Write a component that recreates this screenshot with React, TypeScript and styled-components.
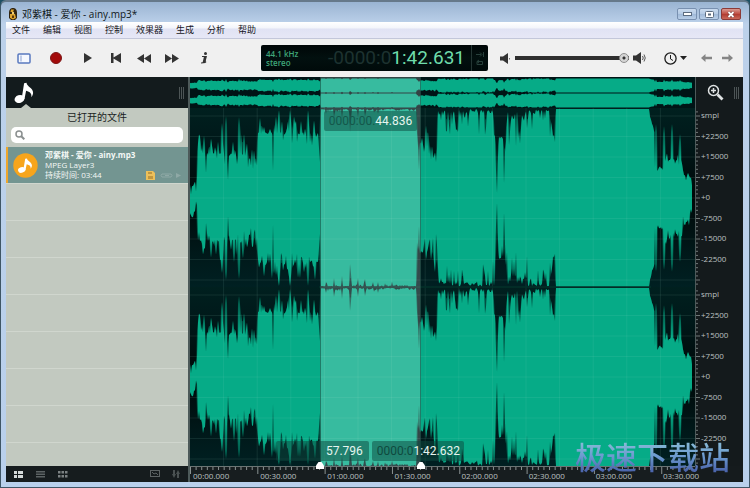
import React from "react";
import styled, { createGlobalStyle, css } from "styled-components";

const Global = createGlobalStyle`
  * { box-sizing: border-box; }
  html, body { margin: 0; height: 100%; }
  body { font-family: "Open Sans", "Noto Sans CJK SC", sans-serif; background: #1d4f63; overflow: hidden; }
  button, input { font: inherit; color: inherit; margin: 0; padding: 0; border: 0; background: none; }
  h2, p { margin: 0; }
`;

const Frame = styled.div`
  position: relative;
  display: flex;
  flex-direction: column;
  height: 100vh;
  padding: 0 6px 5px 5px;
  border: 1px solid #3f5666;
  border-top: 2px solid #66798a;
  border-radius: 6px 6px 0 0;
  background: linear-gradient(#9ab4d2, #bcd1ea 22px, #b9d0ec);
`;

const TitleBar = styled.header`
  display: flex;
  align-items: center;
  flex: 0 0 20px;
  padding: 4px 2px 0 2px;
  font-size: 10px;
  line-height: 14px;
  color: #101820;
`;
const Title = styled.span`
  flex: 1;
  margin-left: 4px;
`;
const WindowButtons = styled.div`
  display: flex;
  gap: 2px;
`;
const WindowButton = styled.button<{ $close?: boolean }>`
  width: 20px;
  height: 12px;
  border: 1px solid ${(p) => (p.$close ? "#8c3a38" : "#7890b0")};
  border-radius: 2px;
  background: ${(p) =>
    p.$close
      ? "linear-gradient(#d99a92, #bf4b40 50%, #b03a30 51%, #c9685a)"
      : "linear-gradient(#c9daee, #b4cae4 50%, #9fb9d8 51%, #b9cfe8)"};
  display: flex;
  align-items: center;
  justify-content: center;
`;

const MenuBar = styled.nav`
  display: flex;
  flex: 0 0 17px;
  gap: 13px;
  padding: 0 6px;
  border-bottom: 1px solid #c3c7da;
  background: linear-gradient(#ffffff, #f4f6fb 35%, #e1e3f4 45%, #e6e7f6);
`;
const MenuItem = styled.button`
  font-size: 9px;
  line-height: 16px;
  color: #16161c;
`;

const Toolbar = styled.div`
  display: grid;
  grid-template-columns: minmax(0, 1fr) 227px minmax(0, 1fr);
  align-items: center;
  flex: 0 0 38px;
  background: #f0f0f0;
`;
const ToolGroup = styled.div`
  display: flex;
  align-items: center;
  gap: 4px;
  padding-left: 4px;
`;
const Transport = styled.div`
  display: flex;
`;
const ToolButton = styled.button`
  display: flex;
  align-items: center;
  justify-content: center;
  width: 28px;
  height: 24px;
`;
const Lcd = styled.div`
  display: flex;
  align-items: center;
  height: 26px;
  border-radius: 2px;
  background: linear-gradient(#000607, #02100f 50%, #000a0a);
  font-family: Roboto, "Open Sans", sans-serif;
`;
const LcdFormat = styled.div`
  flex: 1;
  padding-left: 5px;
  font-family: "Open Sans", sans-serif;
  font-size: 8px;
  font-weight: 600;
  line-height: 9px;
  color: #3fa579;
`;
const LcdTime = styled.output`
  font-size: 19px;
  line-height: 26px;
  color: #6fdcab;
  white-space: nowrap;
  padding-right: 6px;
`;
const Ghost = styled.span<{ $tone: string }>`
  color: ${(p) => p.$tone};
`;
const LcdFlags = styled.div`
  display: flex;
  align-items: center;
  justify-content: center;
  width: 17px;
  height: 26px;
  border-left: 1px solid #243634;
`;
const RightTools = styled.div`
  display: flex;
  align-items: center;
  padding: 0 10px 0 12px;
`;
const Volume = styled.label`
  display: flex;
  align-items: center;
  flex: 1;
  min-width: 0;
  gap: 4px;
  > svg { flex-shrink: 0; }
`;
const VolumeSlider = styled.input`
  appearance: none;
  flex: 1;
  min-width: 0;
  height: 10px;
  background: linear-gradient(#2f2f2f, #2f2f2f) center / 100% 4px no-repeat;
  border-radius: 2px;
  &::-webkit-slider-thumb {
    appearance: none;
    width: 10px;
    height: 10px;
    border: 1px solid #8e8e8e;
    border-radius: 50%;
    background: radial-gradient(circle, #333 0 1px, #d4d4d4 2px);
  }
`;
const ClockButton = styled.button`
  display: flex;
  align-items: center;
  gap: 3px;
  margin-left: 18px;
`;
const History = styled.div`
  display: flex;
  gap: 10px;
  margin-left: 14px;
  button { display: flex; }
`;

const Body = styled.main`
  display: flex;
  flex: 1;
  min-height: 0;
  background: #151b1d;
`;
const Sidebar = styled.aside`
  display: flex;
  flex-direction: column;
  width: 182px;
  flex-shrink: 0;
`;
const SidebarTabs = styled.div`
  display: flex;
  justify-content: space-between;
  align-items: center;
  flex: 0 0 31px;
  padding: 0 4px 0 8px;
  background: #131b1d;
`;
const TabButton = styled.button`
  position: relative;
  display: flex;
  align-items: center;
  height: 31px;
  &::after {
    content: "";
    position: absolute;
    left: 7px;
    bottom: 0;
    border: 5px solid transparent;
    border-top: 0;
    border-bottom: 4px solid #c2c9c0;
  }
`;
const Panel = styled.section`
  display: flex;
  flex-direction: column;
  flex: 1;
  background: #c2c9c0;
`;
const PanelTitle = styled.h2`
  font-size: 10px;
  font-weight: 400;
  line-height: 19px;
  text-align: center;
  color: #1b1f1f;
`;
const SearchBox = styled.label`
  display: flex;
  align-items: center;
  gap: 4px;
  height: 16px;
  margin: 0 5px 4px;
  padding: 0 4px;
  border-radius: 5px;
  background: #fff;
  input { flex: 1; min-width: 0; font-size: 9px; outline: 0; }
`;
const FileList = styled.div`
  flex: 1;
  background: repeating-linear-gradient(#c2c9c0 0 36px, #d0d6ce 36px 37px);
`;
const FileRow = styled.button`
  display: flex;
  align-items: center;
  gap: 7px;
  width: 100%;
  height: 36px;
  padding: 0 4px 0 5px;
  border-left: 2px solid #efa62b;
  background: #739591;
  color: #f4f8f6;
  text-align: left;
`;
const FileText = styled.span`
  flex: 1;
  display: flex;
  flex-direction: column;
  font-size: 8px;
  line-height: 10px;
  white-space: nowrap;
`;
const LastLine = styled.span`
  display: flex;
  justify-content: space-between;
  align-items: center;
`;
const SidebarFooter = styled.div`
  display: flex;
  align-items: center;
  flex: 0 0 16px;
  gap: 11px;
  padding: 0 7px;
  background: #161c1e;
  button { display: flex; }
`;
const Spacer = styled.span`
  flex: 1;
`;

const Editor = styled.section`
  display: grid;
  grid-template-columns: minmax(0, 1fr) 48px;
  grid-template-rows: minmax(0, 1fr) 16px;
  flex: 1;
  min-width: 0;
  border-left: 2px solid #4d5a5a;
`;
const WaveArea = styled.div`
  position: relative;
  overflow: hidden;
  > svg { position: absolute; inset: 0; width: 100%; height: 100%; }
`;
const Selection = styled.div`
  position: absolute;
  top: 0;
  bottom: 0;
  left: 25.8%;
  width: 19.9%;
  background: rgba(255, 255, 255, 0.2);
  border-left: 1px solid rgba(10, 60, 50, 0.5);
  border-right: 1px solid rgba(10, 60, 50, 0.5);
`;
const tagPlace = {
  length: css`top: 34px; right: 55%; padding: 0 5px;`,
  start: css`bottom: 5px; right: 64.6%; padding: 0 6px 0 50px;`,
  end: css`bottom: 5px; left: 36%; padding: 0 4px 0 5px;`,
};
const TimeTag = styled.output<{ $place: keyof typeof tagPlace }>`
  position: absolute;
  ${(p) => tagPlace[p.$place]}
  border-radius: 2px;
  background: rgba(12, 72, 62, 0.5);
  font: 12px/20px Roboto, "Open Sans", sans-serif;
  color: #e6f5ef;
  white-space: nowrap;
`;
const ScaleColumn = styled.div`
  display: grid;
  grid-template-rows: 31px 1fr 1fr;
  background: #141a1c;
  font-size: 8px;
  color: #bcc0c0;
`;
const ScaleHead = styled.div`
  display: flex;
  align-items: center;
  justify-content: space-between;
  padding: 0 4px 0 11px;
  border-left: 1px solid #4d5a5a;
  button { display: flex; }
`;
const ChannelScale = styled.div`
  display: flex;
  min-height: 0;
  border-left: 1px solid #4d5a5a;
  > svg { width: 4px; height: 100%; flex-shrink: 0; }
`;
const ScaleLabels = styled.div`
  display: flex;
  flex-direction: column;
  justify-content: space-between;
  padding: 0 0 21px 1px;
  line-height: 14px;
`;
const Ruler = styled.div`
  position: relative;
  grid-column: 1;
  border-top: 1px solid #6b7474;
  background: #171d1f;
  > svg { position: absolute; inset: 0; width: 100%; height: 7px; }
`;
const RulerLabels = styled.div`
  display: grid;
  grid-template-columns: repeat(7, minmax(0, 67fr)) minmax(0, 35fr);
  padding-top: 2px;
  font-size: 8px;
  line-height: 13px;
  color: #bcc0c0;
  span { padding-left: 3px; white-space: nowrap; }
`;
const Marker = styled.svg<{ $at: string }>`
  && {
    position: absolute;
    inset: auto;
    top: -5px;
    left: ${(p) => p.$at};
    width: 8px;
    height: 7px;
    transform: translateX(-50%);
  }
`;
const Watermark = styled.div`
  position: absolute;
  right: 19px;
  bottom: 10px;
  font: 500 31px/42px "Noto Sans CJK SC", sans-serif;
  color: transparent;
  background: linear-gradient(#86b8d6 20%, #6d9bd0 50%, #4c66ad 85%);
  background-clip: text;
  -webkit-background-clip: text;
  pointer-events: none;
`;

/* ---------- waveform ---------- */

const WIDTH = 505;
const HEIGHT = 389;

function randomFrom(seed: number) {
  let s = seed;
  return () => {
    s = (s + 0x6d2b79f5) | 0;
    let t = Math.imul(s ^ (s >>> 15), 1 | s);
    t = (t + Math.imul(t ^ (t >>> 7), 61 | t)) ^ t;
    return ((t ^ (t >>> 14)) >>> 0) / 4294967296;
  };
}

type Part = {
  to: number;
  body: [number, number];
  up: number;
  down: number;
  upRate: number;
  downRate: number;
};

// Amplitudes run from 0 to 89; each part covers the columns up to `to`.
const parts: Part[] = [
  { to: 8, body: [12, 14], up: 32, down: 0, upRate: 0.45, downRate: 0.4 },
  { to: 56, body: [44, 42], up: 64, down: 32, upRate: 0.45, downRate: 0.2 },
  { to: 68, body: [40, 32], up: 58, down: 28, upRate: 0.4, downRate: 0.25 },
  { to: 129, body: [65, 64], up: 82, down: 52, upRate: 0.45, downRate: 0.15 },
  { to: 227, body: [88, 88], up: 89, down: 83, upRate: 0.4, downRate: 0.1 },
  { to: 248, body: [56, 48], up: 84, down: 38, upRate: 0.25, downRate: 0.3 },
  { to: 305, body: [84, 87], up: 89, down: 62, upRate: 0.25, downRate: 0.38 },
  { to: 316, body: [60, 60], up: 65, down: 42, upRate: 0.2, downRate: 0.2 },
  { to: 338, body: [78, 80], up: 87, down: 52, upRate: 0.3, downRate: 0.42 },
  { to: 360, body: [85, 87], up: 89, down: 68, upRate: 0.4, downRate: 0.36 },
  { to: 366, body: [66, 62], up: 70, down: 58, upRate: 0.1, downRate: 0.2 },
  { to: 460, body: [89, 89], up: 89, down: 89, upRate: 0, downRate: 0 },
  { to: 465, body: [82, 62], up: 80, down: 60, upRate: 0, downRate: 0 },
  { to: 475, body: [29, 29], up: 32, down: 28, upRate: 0.2, downRate: 0.1 },
  { to: 493, body: [40, 36], up: 48, down: 30, upRate: 0.2, downRate: 0.2 },
  { to: 500, body: [24, 22], up: 28, down: 17, upRate: 0.3, downRate: 0.2 },
  { to: 503, body: [20, 20], up: 24, down: 10, upRate: 0.3, downRate: 0.3 },
];

const peaks: Record<number, number> = {
  16: 25, 32: 75, 36: 82, 38: 18, 49: 81, 83: 27, 89: 88, 100: 88, 107: 56, 118: 88,
  129: 50, 130: 36, 136: 84, 144: 80, 152: 78, 160: 66, 161: 76, 168: 80, 175: 81, 188: 84,
  228: 52, 229: 28, 234: 46, 239: 44, 243: 40, 246: 36,
  306: 28, 307: 5, 308: 42, 314: 15, 315: 46, 361: 76, 362: 70, 365: 56,
  466: 74, 474: 72, 482: 74, 490: 64,
};

function envelope(seed: number) {
  const rnd = randomFrom(seed);
  const out: number[] = [];
  let from = 0;
  for (const p of parts) {
    for (let x = from; x < p.to; x++) {
      const t = (x - from) / (p.to - from);
      const base = p.body[0] + (p.body[1] - p.body[0]) * t;
      const r = rnd();
      const k = rnd();
      let a = base + (k - 0.5) * (p.up === p.down ? 0 : 4);
      if (r < p.upRate) a = base + (p.up - base) * k;
      else if (r > 1 - p.downRate) a = base - (base - p.down) * k;
      out.push(Math.min(89, peaks[x] ?? a));
    }
    from = p.to;
  }
  return out;
}

function outline(top: number[], bottom: number[], center: number, scale: (a: number) => number) {
  const up = top.map((a, x) => `${x} ${(center - scale(a)).toFixed(1)}`);
  const down = bottom.map((a, x) => `${x} ${(center + scale(a)).toFixed(1)}`).reverse();
  return `M${up.join("L")}L${down.join("L")}Z`;
}

// Spreading each peak to its neighbours gives the soft halo around the spikes.
const widen = (v: number[]) =>
  v.map((a, i) => Math.max(a, (v[i - 1] ?? 0) - 8, (v[i + 1] ?? 0) - 8));

const topEnv = envelope(7);
const lowEnv = envelope(29);

const mainScale = (a: number) => a;
const smallScale = (a: number) => (a > 84 ? 7 : 2 + a * 0.055);

function Waveform() {
  const centers = [121, 300];
  return (
    <svg viewBox={`0 0 ${WIDTH} ${HEIGHT}`} preserveAspectRatio="none" aria-label="波形">
      <defs>
        <linearGradient id="back" x1="0" y1="0" x2="0" y2="1">
          <stop offset="0" stopColor="#00201f" />
          <stop offset="0.2" stopColor="#001819" />
          <stop offset="0.5" stopColor="#000808" />
          <stop offset="0.8" stopColor="#001819" />
          <stop offset="1" stopColor="#002022" />
        </linearGradient>
      </defs>
      <rect width={WIDTH} height="31" fill="#001416" />
      <rect y="31" width={WIDTH} height="179" fill="url(#back)" />
      <rect y="210" width={WIDTH} height="179" fill="url(#back)" />
      {[8.5, 23.5].map((c) => (
        <path key={c} d={outline(topEnv, lowEnv, c, smallScale)} fill="#06ab87" />
      ))}
      {centers.map((c) => (
        <g key={c}>
          <path d={outline(widen(topEnv), widen(lowEnv), c, mainScale)} fill="#06ab87" opacity="0.35" />
          <path d={outline(topEnv, lowEnv, c, mainScale)} fill="#06ab87" />
        </g>
      ))}
      <g stroke="#9fe0d0" strokeOpacity="0.1">
        {centers.flatMap((c) =>
          [-82, -61.5, -41, -20.5, 0, 20.5, 41, 61.5, 82].map((d) => (
            <line key={`${c}${d}`} x1="0" x2={WIDTH} y1={c + d} y2={c + d} />
          ))
        )}
        {Array.from({ length: 14 }, (_, i) => (
          <line key={i} x1={33.6 * (i + 1)} x2={33.6 * (i + 1)} y1="31" y2={HEIGHT} />
        ))}
      </g>
      <line x1="129" x2="461" y1="210" y2="210" stroke="#03302a" strokeWidth="1.4" />
    </svg>
  );
}

/* ---------- icons ---------- */

const Note = ({ w, h, color }: { w: number; h: number; color: string }) => (
  <svg width={w} height={h} viewBox="0 0 19 22" fill={color}>
    <ellipse cx="5" cy="17" rx="5" ry="4" transform="rotate(-18 5 17)" />
    <path d="M7.2 16.5 9.6 1.2 12 .8c.4 4 6.8 5.200 6.600 10.200-.1 1.500-.8 3-1.800 4.200.7-3.400-1.200-5.400-5.200-6.400L10 17z" />
  </svg>
);
const Grip = () => (
  <svg width="5" height="12" viewBox="0 0 5 12" stroke="#4d5556">
    <path d="M.5 0v12M2.500 0v12M4.500 0v12" />
  </svg>
);
const Arrow = ({ flip }: { flip?: boolean }) => (
  <svg width="11" height="8" viewBox="0 0 11 8">
    <path d={flip ? "M11 4 6.500 0v2.700H0v2.600h6.500V8z" : "M0 4 4.500 0v2.700H11v2.600H4.500V8z"} fill="#858585" />
  </svg>
);

function ScaleTicks() {
  return (
    <svg viewBox="0 0 4 179" preserveAspectRatio="none" stroke="#7b8383">
      {Array.from({ length: 43 }, (_, i) => {
        const n = i - 21;
        return <line key={i} x1="0" x2={n % 5 === 0 ? 4 : 2} y1={90 + n * 4.1} y2={90 + n * 4.1} strokeWidth="0.9" />;
      })}
    </svg>
  );
}

const menus = ["文件", "编辑", "视图", "控制", "效果器", "生成", "分析", "帮助"];
const levels = ["smpl", "+22500", "+15000", "+7500", "+0", "-7500", "-15000", "-22500"];
const times = ["00:00.000", "00:30.000", "01:00.000", "01:30.000", "02:00.000", "02:30.000", "03:00.000", "03:30.000"];

export default function App() {
  return (
    <>
      <Global />
      <Frame>
        <TitleBar>
          <svg width="10" height="12" viewBox="0 0 10 12">
            <path d="M1 5C1 1 3 0 5 0s4 1 4 5v5l-2 2H3l-2-2z" fill="#30230f" />
            <path d="M3 1.500h3L5 4H2.500zM2 6h5l1 4-3 1.500L2 10z" fill="#dda52f" />
            <circle cx="5" cy="5" r="1.200" fill="#f3d27a" />
            <path d="M4 7.500h2V10H4z" fill="#57360d" />
          </svg>
          <Title>邓紫棋 - 爱你 - ainy.mp3*</Title>
          <WindowButtons>
            <WindowButton aria-label="最小化">
              <svg width="9" height="4"><rect x=".5" y=".5" width="8" height="3" fill="#fff" stroke="#5c6c80" /></svg>
            </WindowButton>
            <WindowButton aria-label="最大化">
              <svg width="9" height="7"><rect x=".5" y=".5" width="8" height="6" rx="1" fill="#fff" stroke="#5c6c80" /><rect x="3" y="2.500" width="3" height="2" fill="#5c6c80" /></svg>
            </WindowButton>
            <WindowButton $close aria-label="关闭">
              <svg width="8" height="7" viewBox="0 0 8 7"><path d="m1.500 1 5 5m0-5-5 5" stroke="#6c3434" strokeWidth="3" /><path d="m1.500 1 5 5m0-5-5 5" stroke="#fff" strokeWidth="1.800" /></svg>
            </WindowButton>
          </WindowButtons>
        </TitleBar>

        <MenuBar>
          {menus.map((m) => <MenuItem key={m}>{m}</MenuItem>)}
        </MenuBar>

        <Toolbar>
          <ToolGroup>
            <ToolButton aria-label="侧栏">
              <svg width="14" height="11"><rect x="1" y="1" width="12" height="9" rx="1" fill="#f5f8ff" stroke="#5878bf" strokeWidth="1.500" /><path d="M4 2.500v6" stroke="#8aa0d0" /></svg>
            </ToolButton>
            <ToolButton aria-label="录音">
              <svg width="12" height="12"><circle cx="6" cy="6" r="5.500" fill="#a30b0b" stroke="#7c1616" /></svg>
            </ToolButton>
            <Transport>
              <ToolButton aria-label="播放">
                <svg width="8" height="10"><path d="M0 0 8 5 0 10z" fill="#333" /></svg>
              </ToolButton>
              <ToolButton aria-label="开头">
                <svg width="10" height="10"><path d="M0 0h2.500v4.500L10 0v10L2.500 5.500V10H0z" fill="#333" /></svg>
              </ToolButton>
              <ToolButton aria-label="快退">
                <svg width="14" height="9"><path d="M0 4.500 7 0v9zM7 4.500 14 0v9z" fill="#333" /></svg>
              </ToolButton>
              <ToolButton aria-label="快进">
                <svg width="14" height="9"><path d="M0 0 7 4.500 0 9zM7 0 14 4.500 7 9z" fill="#333" /></svg>
              </ToolButton>
            </Transport>
            <ToolButton aria-label="信息">
              <svg width="7" height="12"><circle cx="4.500" cy="1.500" r="1.500" fill="#333" /><path d="M1 4.500h4.200L3.800 10h1.400M0 11l4.500-.5" fill="none" stroke="#333" strokeWidth="1.200" /><path d="M3 4.500h2.200L4 11H1.500z" fill="#333" /></svg>
            </ToolButton>
          </ToolGroup>

          <Lcd>
            <LcdFormat>44.1 kHz<br />stereo</LcdFormat>
            <LcdTime><Ghost $tone="#1d3230">-0000:0</Ghost>1:42.631</LcdTime>
            <LcdFlags>
              <svg width="8" height="13" fill="none" stroke="#27403b">
                <path d="M0 2.500h5M4 .5l2 2-2 2M7.500 0v5M1 9.500h5.500v3H1zM3 8l-2 1.500L3 11" />
              </svg>
            </LcdFlags>
          </Lcd>

          <RightTools>
            <Volume>
              <svg width="11" height="11" viewBox="0 0 11 11" fill="#333"><path d="M0 3.500h3L8 0v11L3 7.500H0z" /><path d="M9.500 5v1.500" stroke="#777" /></svg>
              <VolumeSlider type="range" aria-label="音量" min="0" max="100" defaultValue="100" />
              <svg width="13" height="12" viewBox="0 0 13 12"><path d="M0 3.500h3L8 0v12L3 8.500H0z" fill="#333" /><path d="M9.500 4q1.500 2 0 4M11 2.500q2.500 3.500 0 7" fill="none" stroke="#555" /></svg>
            </Volume>
            <ClockButton aria-label="时间格式">
              <svg width="13" height="13" fill="none" stroke="#1c1c1c"><circle cx="6.500" cy="6.500" r="5.600" strokeWidth="1.300" /><path d="M6.500 3v4l2.500 1.500" /></svg>
              <svg width="7" height="4"><path d="M0 0h7L3.500 4z" fill="#222" /></svg>
            </ClockButton>
            <History>
              <button aria-label="撤销"><Arrow /></button>
              <button aria-label="重做"><Arrow flip /></button>
            </History>
          </RightTools>
        </Toolbar>

        <Body>
          <Sidebar>
            <SidebarTabs>
              <TabButton aria-label="音频文件"><Note w={20} h={22} color="#fff" /></TabButton>
              <Grip />
            </SidebarTabs>
            <Panel>
              <PanelTitle>已打开的文件</PanelTitle>
              <SearchBox>
                <svg width="10" height="10" fill="none" stroke="#8a8f8f" strokeWidth="1.500"><circle cx="4" cy="4" r="3" /><path d="m6.300 6.300 3 3" strokeWidth="2" /></svg>
                <input type="search" aria-label="搜索" />
              </SearchBox>
              <FileList>
                <FileRow>
                  <svg width="25" height="25" viewBox="0 0 25 25"><circle cx="12.500" cy="12.500" r="12.200" fill="#f7a51c" /><g transform="translate(5 5) scale(.75 .7)" fill="#fff"><ellipse cx="5" cy="17" rx="5" ry="4" transform="rotate(-18 5 17)" /><path d="M7.200 16.500 9.600 1.200 12 .8c.4 4 6.800 5.200 6.600 10.200-.1 1.500-.8 3-1.800 4.200.7-3.400-1.200-5.400-5.200-6.400L10 17z" /></g></svg>
                  <FileText>
                    <b>邓紫棋 - 爱你 - ainy.mp3</b>
                    <span>MPEG Layer3</span>
                    <LastLine>
                      持续时间: 03:44
                      <svg width="38" height="9" viewBox="0 0 38 9">
                        <path d="M0 0h7l2 2v7H0z" fill="#edc05a" /><path d="M2 1h4v2H2zM2 5h5v3H2z" fill="#c1963f" />
                        <path d="M16 3h9q2 1.500 0 3h-9q-2-1.500 0-3zM19 4.500h4" fill="none" stroke="#8fa9a6" />
                        <path d="M30 2l5 2.500L30 7z" fill="#8fa9a6" />
                      </svg>
                    </LastLine>
                  </FileText>
                </FileRow>
              </FileList>
            </Panel>
            <SidebarFooter>
              <button aria-label="详细列表"><svg width="11" height="7" fill="#d5dada"><path d="M1 0h3v3H1zM1 4h3v3H1zM5 0h5v3H5zM5 4h5v3H5z" /></svg></button>
              <button aria-label="简单列表"><svg width="11" height="7" fill="#5c6364"><path d="M1 0h9v1.500H1zM1 2.500h9V4H1zM1 5h9v1.500H1z" /></svg></button>
              <button aria-label="网格"><svg width="11" height="7" fill="#7c8283"><path d="M1 0h2.500v2.500H1zM4.500 0H7v2.500H4.500zM8 0h2.500v2.500H8zM1 4h2.500v2.500H1zM4.500 4H7v2.500H4.500zM8 4h2.500v2.500H8z" /></svg></button>
              <Spacer />
              <button aria-label="图像"><svg width="10" height="8" fill="none" stroke="#5c6364"><rect x=".5" y=".5" width="9" height="6" /><path d="m2 2 2 2 2-1 2 2" /></svg></button>
              <button aria-label="排序"><svg width="10" height="8" fill="#4a5152"><path d="M2 0h2v4h1L3 8 1 4h1zM6 8h2V4h1L7 0 5 4h1z" /></svg></button>
            </SidebarFooter>
          </Sidebar>

          <Editor>
            <WaveArea>
              <Waveform />
              <Selection />
              <TimeTag $place="length"><Ghost $tone="#14584b">0000:00.</Ghost>44.836</TimeTag>
              <TimeTag $place="start">57.796</TimeTag>
              <TimeTag $place="end"><Ghost $tone="#0f4a3e">0000:0</Ghost>1:42.632</TimeTag>
            </WaveArea>
            <ScaleColumn>
              <ScaleHead>
                <button aria-label="放大">
                  <svg width="17" height="17" fill="none" stroke="#dfe3e3"><circle cx="6.500" cy="6.500" r="5" strokeWidth="1.500" /><path d="M4 6.500h5M6.500 4v5" strokeWidth="1.500" /><path d="m10.500 10.500 5 5" strokeWidth="2.800" /></svg>
                </button>
                <Grip />
              </ScaleHead>
              {[0, 1].map((c) => (
                <ChannelScale key={c}>
                  <ScaleTicks />
                  <ScaleLabels>{levels.map((l) => <span key={l}>{l}</span>)}</ScaleLabels>
                </ChannelScale>
              ))}
            </ScaleColumn>
            <Ruler>
              <svg viewBox="0 0 505 7" preserveAspectRatio="none" stroke="#8a9292">
                {Array.from({ length: 90 }, (_, i) => (
                  <line key={i} x1={0.5 + i * 5.61} x2={0.5 + i * 5.61} y1="0" y2={i % 12 === 0 ? 7 : 3} />
                ))}
              </svg>
              <RulerLabels>{times.map((t) => <span key={t}>{t}</span>)}</RulerLabels>
              {["25.8%", "45.7%"].map((at) => (
                <Marker key={at} $at={at} viewBox="0 0 8 7"><path d="M0 7V3.500L2.500 0h3L8 3.500V7z" fill="#fff" /></Marker>
              ))}
            </Ruler>
          </Editor>
        </Body>
        <Watermark>极速下载站</Watermark>
      </Frame>
    </>
  );
}
